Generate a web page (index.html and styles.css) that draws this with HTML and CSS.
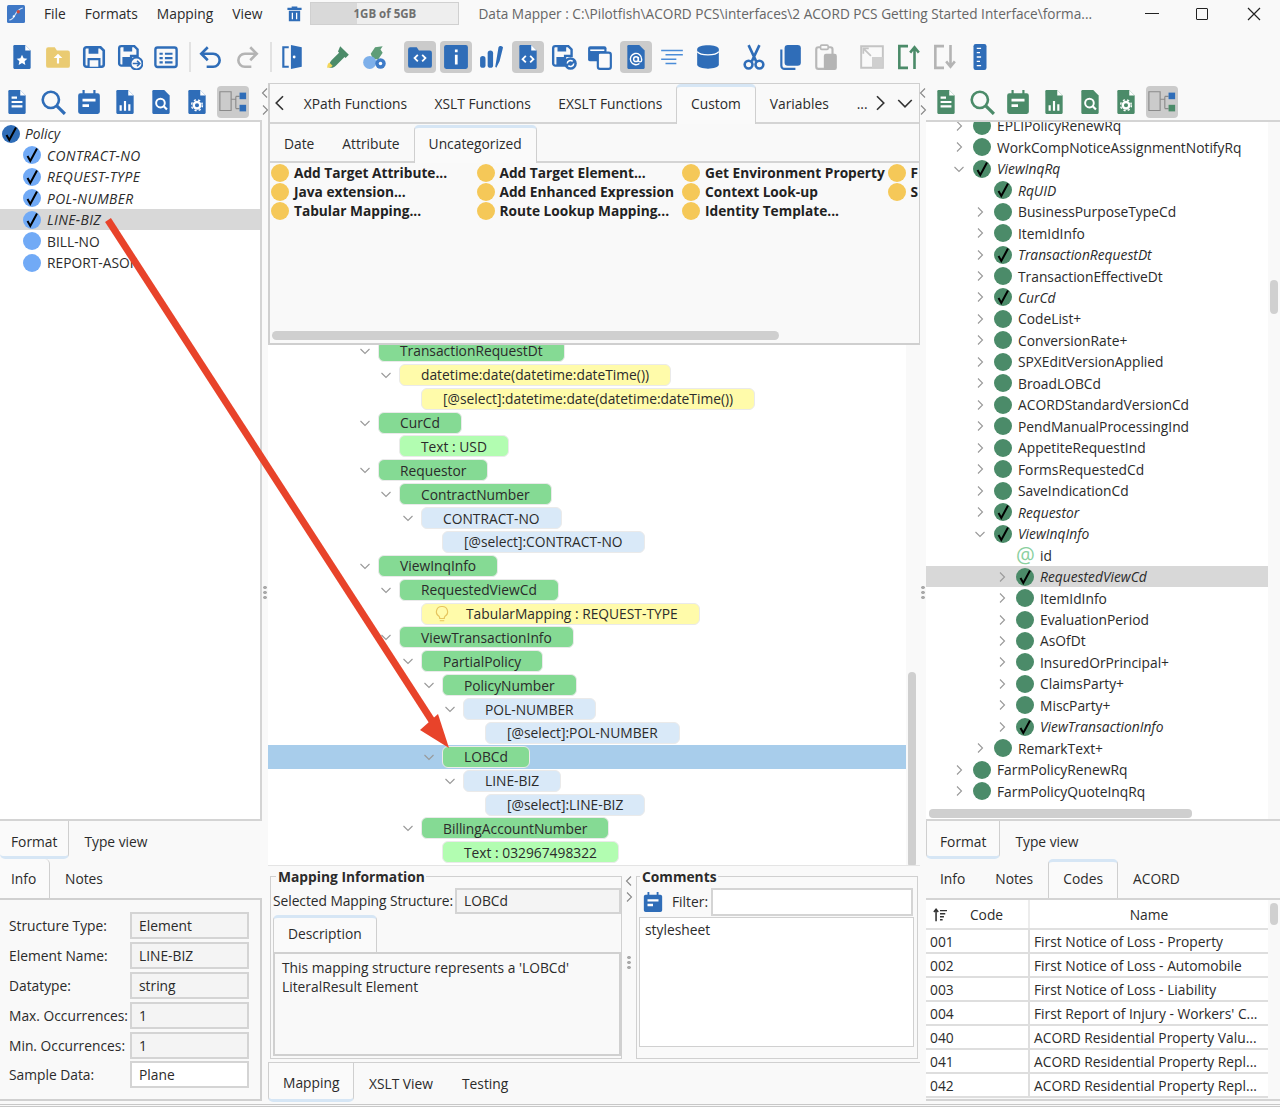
FILE: index.html
```html
<!DOCTYPE html>
<html lang="en">
<head>
<meta charset="UTF-8">
<title>Data Mapper</title>
<link rel="stylesheet" href="styles.css">
</head>
<body>
<svg class="defs" width="0" height="0">
	<symbol id="i-tick" viewBox="0 0 18 18"><path d="M4.500 10l2.800 5L14 2.500" fill="none" stroke="#000" stroke-width="2"/></symbol>
	<symbol id="i-chev" viewBox="0 0 12 12"><path d="M4 1.500L8.500 6 4 10.500" fill="none" stroke="currentColor" stroke-width="1.100"/></symbol>
	<symbol id="i-down" viewBox="0 0 12 12"><path d="M1.500 4L6 8.500 10.500 4" fill="none" stroke="currentColor" stroke-width="1.100"/></symbol>
	<symbol id="i-docstar" viewBox="0 0 24 24"><path d="M5 1h10l5 5v16a1 1 0 0 1-1 1H5a1 1 0 0 1-1-1V2a1 1 0 0 1 1-1z" fill="currentColor"/><path d="M15 1v5h5z" fill="#fff"/><path d="M12 10l1.500 3.200 3.400.4-2.500 2.300.7 3.400-3.100-1.700-3.100 1.700.7-3.400-2.500-2.300 3.400-.4z" fill="#fff"/></symbol>
	<symbol id="i-folder" viewBox="0 0 24 24"><path d="M1 5a2 2 0 0 1 2-2h6l2 3h10a2 2 0 0 1 2 2v12a2 2 0 0 1-2 2H3a2 2 0 0 1-2-2z" fill="#eacb72"/><path d="M12 9l4 4h-3v5h-2v-5H8z" fill="#fff"/></symbol>
	<symbol id="i-save" viewBox="0 0 24 24"><path d="M3 5a2 2 0 0 1 2-2h13l3 3v13a2 2 0 0 1-2 2H5a2 2 0 0 1-2-2z" fill="none" stroke="currentColor" stroke-width="2.400"/><path d="M7 3h9v6H7zM6 13h12v8H6z" fill="currentColor"/><path d="M8 15h8v6H8z" fill="#fafafa"/></symbol>
	<symbol id="i-saveas" viewBox="0 0 24 24"><path d="M2 4a2 2 0 0 1 2-2h12l3 3v6h-6v9H4a2 2 0 0 1-2-2z" fill="none" stroke="currentColor" stroke-width="2.200"/><path d="M6 2h8v5H6zM5 12h7v8H5z" fill="currentColor"/><circle cx="18" cy="18" r="5.500" fill="#fafafa" stroke="currentColor" stroke-width="1.800"/><path d="M14.500 18h6M18.500 15.500l2.500 2.500-2.500 2.500" fill="none" stroke="currentColor" stroke-width="1.500"/></symbol>
	<symbol id="i-list" viewBox="0 0 24 24"><rect x="2.200" y="3.200" width="19.600" height="18" rx="2" fill="none" stroke="currentColor" stroke-width="2.200"/><path d="M6 8h3v2H6zM11 8h7v2h-7zM6 12h3v2H6zM11 12h7v2h-7zM6 16h3v2H6zM11 16h7v2h-7z" fill="currentColor"/></symbol>
	<symbol id="i-undo" viewBox="0 0 24 24"><path d="M9 3L3 9l6 6" fill="none" stroke="currentColor" stroke-width="2.400"/><path d="M3 9h11a6 6 0 0 1 0 12H8" fill="none" stroke="currentColor" stroke-width="2.400"/></symbol>
	<symbol id="i-redo" viewBox="0 0 24 24"><path d="M15 3l6 6-6 6" fill="none" stroke="currentColor" stroke-width="2.400"/><path d="M21 9H10a6 6 0 0 0 0 12h6" fill="none" stroke="currentColor" stroke-width="2.400"/></symbol>
	<symbol id="i-door" viewBox="0 0 24 24"><path d="M3 2h6v2H5v16h4v2H3z" fill="currentColor"/><path d="M11 1l10 2v18l-10 2z" fill="currentColor"/><circle cx="14" cy="12" r="1.300" fill="#fff"/></symbol>
	<symbol id="i-dropper" viewBox="0 0 24 24"><path d="M14 2l8 8-3 3-1-1-8 8c-2 2-4 2-6 2 0-3 0-5 2-7l7-7-1-1z" fill="currentColor"/><path d="M2 22c2 0 4-.5 5-2l-3-3c-1.500 1-2 3-2 5z" fill="#f4d75a"/></symbol>
	<symbol id="i-bugs" viewBox="0 0 24 24"><path d="M13 3l7-1-2 3 2 3-4 6h-5l-2-5z" fill="#5f9d78"/><ellipse cx="8" cy="17" rx="6" ry="6" fill="#7eb0ea"/><circle cx="18" cy="18" r="4.800" fill="#3f7cc8"/><circle cx="18" cy="18" r="1.600" fill="#fff"/></symbol>
	<symbol id="i-foldercode" viewBox="0 0 24 24"><path d="M1 5a2 2 0 0 1 2-2h6l2 3h10a2 2 0 0 1 2 2v12a2 2 0 0 1-2 2H3a2 2 0 0 1-2-2z" fill="currentColor"/><path d="M10 10l-3 3 3 3M14 10l3 3-3 3" fill="none" stroke="#fff" stroke-width="1.700"/></symbol>
	<symbol id="i-info" viewBox="0 0 24 24"><rect x="1" y="1" width="22" height="22" rx="2" fill="currentColor"/><path d="M11 5h2.500v2.500H11zM11 10h2.500v9H11z" fill="#fff"/></symbol>
	<symbol id="i-chart" viewBox="0 0 24 24"><rect x="1" y="11" width="5" height="11" rx="2.500" fill="currentColor"/><rect x="8" y="6" width="5" height="16" rx="2.500" fill="currentColor"/><path d="M15 21l3-18c1-2 5-1 4 1l-3 12-3 6z" fill="currentColor"/></symbol>
	<symbol id="i-doccode" viewBox="0 0 24 24"><path d="M5 1h10l5 5v16a1 1 0 0 1-1 1H5a1 1 0 0 1-1-1V2a1 1 0 0 1 1-1z" fill="currentColor"/><path d="M15 1v5h5z" fill="#fff"/><path d="M10 11l-3 3 3 3M14 11l3 3-3 3" fill="none" stroke="#fff" stroke-width="1.700"/></symbol>
	<symbol id="i-savesync" viewBox="0 0 24 24"><path d="M2 4a2 2 0 0 1 2-2h12l3 3v6h-6v9H4a2 2 0 0 1-2-2z" fill="none" stroke="currentColor" stroke-width="2.200"/><path d="M6 2h8v5H6zM5 12h7v8H5z" fill="currentColor"/><circle cx="18" cy="18" r="5.800" fill="currentColor"/><path d="M15 18a3 3 0 0 1 5-2M21 18a3 3 0 0 1-5 2" fill="none" stroke="#fff" stroke-width="1.400"/></symbol>
	<symbol id="i-devices" viewBox="0 0 24 24"><rect x="1" y="2" width="17" height="14" rx="2" fill="currentColor"/><path d="M3 5h13v1.500H3z" fill="#fff"/><rect x="10" y="8" width="12" height="15" rx="2" fill="#fafafa" stroke="currentColor" stroke-width="2"/></symbol>
	<symbol id="i-at" viewBox="0 0 24 24"><path d="M5 1h10l5 5v16a1 1 0 0 1-1 1H5a1 1 0 0 1-1-1V2a1 1 0 0 1 1-1z" fill="currentColor"/><circle cx="12" cy="14" r="2.200" fill="none" stroke="#fff" stroke-width="1.300"/><path d="M14.200 12v3a1.500 1.500 0 0 0 3 0v-1a5.200 5.200 0 1 0-2 4" fill="none" stroke="#fff" stroke-width="1.300"/></symbol>
	<symbol id="i-lines" viewBox="0 0 24 24"><path d="M2 6h20M6 10h16M2 14h14M6 18h10" fill="none" stroke="#4a8cd8" stroke-width="1.400"/></symbol>
	<symbol id="i-db" viewBox="0 0 24 24"><path d="M2 5c0-5 20-5 20 0v14c0 5-20 5-20 0z" fill="currentColor"/><path d="M2 7c3 4 17 4 20 0" fill="none" stroke="#fff" stroke-width="1.200"/></symbol>
	<symbol id="i-cut" viewBox="0 0 24 24"><path d="M7 1l7 15M17 1l-7 15" fill="none" stroke="currentColor" stroke-width="2.400"/><circle cx="7" cy="19" r="3.600" fill="none" stroke="currentColor" stroke-width="2.400"/><circle cx="17" cy="19" r="3.600" fill="none" stroke="currentColor" stroke-width="2.400"/></symbol>
	<symbol id="i-copy" viewBox="0 0 24 24"><rect x="7" y="1" width="15" height="19" rx="3" fill="currentColor"/><path d="M4 5v15a3 3 0 0 0 3 3h10" fill="none" stroke="currentColor" stroke-width="2"/></symbol>
	<symbol id="i-paste" viewBox="0 0 24 24"><rect x="3" y="3" width="15" height="20" rx="2" fill="none" stroke="#b8b8b8" stroke-width="2"/><rect x="7" y="1" width="7" height="4" rx="1" fill="#fafafa" stroke="#b8b8b8" stroke-width="1.500"/><rect x="10" y="9" width="12" height="15" rx="2" fill="#b4b4b4"/></symbol>
	<symbol id="i-resize" viewBox="0 0 24 24"><path d="M2 2h20v20H2z" fill="none" stroke="#c4c4c4" stroke-width="1.800"/><path d="M12 12h10v10H12z" fill="#cfcfcf"/><path d="M4 4l7 7M4 9V4h5" fill="none" stroke="#c4c4c4" stroke-width="1.600"/></symbol>
	<symbol id="i-up" viewBox="0 0 24 24"><path d="M12 2H4v20h8" fill="none" stroke="currentColor" stroke-width="2.400"/><path d="M18 23V4M14 8l4-5 4 5" fill="none" stroke="currentColor" stroke-width="2.400"/></symbol>
	<symbol id="i-dn" viewBox="0 0 24 24"><path d="M12 2H4v20h8" fill="none" stroke="currentColor" stroke-width="2.400"/><path d="M18 1v19M14 16l4 5 4-5" fill="none" stroke="currentColor" stroke-width="2.400"/></symbol>
	<symbol id="i-ruler" viewBox="0 0 24 24"><rect x="6" y="0" width="12" height="24" rx="2" fill="currentColor"/><path d="M9 4h4M9 8h3M9 12h4M9 16h3M9 20h4" stroke="#fff" stroke-width="1.200"/></symbol>
	<symbol id="i-doclines" viewBox="0 0 24 24"><path d="M5 1h10l5 5v16a1 1 0 0 1-1 1H5a1 1 0 0 1-1-1V2a1 1 0 0 1 1-1z" fill="currentColor"/><path d="M15 1v5h5z" fill="#fff"/><path d="M7 11h10v2H7zM7 15h10v2H7zM7 7h5v2H7z" fill="#fff"/></symbol>
	<symbol id="i-search" viewBox="0 0 24 24"><circle cx="10" cy="10" r="7.500" fill="none" stroke="currentColor" stroke-width="2.400"/><path d="M15.500 15.500L23 23" stroke="currentColor" stroke-width="3"/></symbol>
	<symbol id="i-note" viewBox="0 0 24 24"><path d="M6 1h2v3h8V1h2v3h2a2 2 0 0 1 2 2v15a2 2 0 0 1-2 2H4a2 2 0 0 1-2-2V6a2 2 0 0 1 2-2h2z" fill="currentColor"/><path d="M6 9h12v2.500H6zM6 14h6v2.500H6z" fill="#fff"/></symbol>
	<symbol id="i-docchart" viewBox="0 0 24 24"><path d="M5 1h10l5 5v16a1 1 0 0 1-1 1H5a1 1 0 0 1-1-1V2a1 1 0 0 1 1-1z" fill="currentColor"/><path d="M15 1v5h5z" fill="#fff"/><path d="M7 15h2v5H7zM11 11h2v9h-2zM15 14h2v6h-2z" fill="#fff"/></symbol>
	<symbol id="i-docsearch" viewBox="0 0 24 24"><path d="M5 1h10l5 5v16a1 1 0 0 1-1 1H5a1 1 0 0 1-1-1V2a1 1 0 0 1 1-1z" fill="currentColor"/><circle cx="11.500" cy="13" r="4" fill="none" stroke="#fff" stroke-width="1.800"/><path d="M14.500 16l3 3" stroke="#fff" stroke-width="2"/></symbol>
	<symbol id="i-docgear" viewBox="0 0 24 24"><path d="M5 1h10l5 5v16a1 1 0 0 1-1 1H5a1 1 0 0 1-1-1V2a1 1 0 0 1 1-1z" fill="currentColor"/><path d="M15 1v5h5z" fill="#fff"/><circle cx="12" cy="15" r="3" fill="none" stroke="#fff" stroke-width="2.200"/><circle cx="12" cy="15" r="5" fill="none" stroke="#fff" stroke-width="1.300" stroke-dasharray="2 2"/></symbol>
	<symbol id="i-treeb" viewBox="0 0 32 32"><path d="M2 5h12v20H2z" fill="none" stroke="#8a8a8a" stroke-width="1.200"/><path d="M14 13h5M19 10v13M19 10h4M19 23h4" fill="none" stroke="#8a8a8a" stroke-width="1.200"/><rect x="23" y="6" width="7" height="7" fill="#2f6db8"/><rect x="23" y="19" width="7" height="7" fill="#2f6db8"/></symbol>
	<symbol id="i-treeg" viewBox="0 0 32 32"><path d="M2 5h12v20H2z" fill="none" stroke="#8a8a8a" stroke-width="1.200"/><path d="M14 13h5M19 10v13M19 10h4M19 23h4" fill="none" stroke="#8a8a8a" stroke-width="1.200"/><rect x="23" y="6" width="7" height="7" fill="#2f6db8"/><rect x="23" y="19" width="7" height="7" fill="#4b8b69"/></symbol>
	<symbol id="i-trash" viewBox="0 0 24 24"><path d="M8 2h8v2h6v3H2V4h6zM4 8h16v15H4z" fill="currentColor"/><path d="M9 11v9M15 11v9" stroke="#fff" stroke-width="1.800"/></symbol>
	<symbol id="i-logo" viewBox="0 0 24 24"><rect width="24" height="24" rx="2" fill="#3f78c6"/><path d="M3 20c5 0 6-4 9-9s5-6 9-7" fill="none" stroke="#cfe0f7" stroke-width="1.600"/><circle cx="15" cy="9" r="2.200" fill="#d04a3c"/><circle cx="9" cy="15" r="1.500" fill="#fff"/></symbol>
	<symbol id="i-bulb" viewBox="0 0 24 24"><path d="M12 2a7 7 0 0 0-4 13c1 1 1 2 1 3h6c0-1 0-2 1-3a7 7 0 0 0-4-13zM9 21h6" fill="none" stroke="#e6c55f" stroke-width="1.600"/></symbol>
	<symbol id="i-sort" viewBox="0 0 16 16"><path d="M3.500 15V2M1 4.500L3.500 1.500 6 4.500" fill="none" stroke="#333" stroke-width="1.800"/><path d="M8 3h8M8 6.500h6M8 10h4.500M8 13.500h3" stroke="#333" stroke-width="1.700"/></symbol>
</svg>

<div class="window">
	<div class="titlebar">
		<svg class="logo"><use href="#i-logo"/></svg>
		<nav class="menu">
			<span>File</span><span>Formats</span><span>Mapping</span><span>View</span>
		</nav>
		<svg class="trash blue"><use href="#i-trash"/></svg>
		<div class="memory"><div class="memory-used"></div><span class="memory-text">1GB of 5GB</span></div>
		<div class="title-text">Data Mapper : C:\Pilotfish\ACORD PCS\interfaces\2 ACORD PCS Getting Started Interface\forma...</div>
		<div class="win-controls">
			<span class="win-min"></span>
			<span class="win-max"></span>
			<svg class="win-close" viewBox="0 0 14 14"><path d="M1 1l12 12M13 1L1 13" stroke="#222" stroke-width="1.200"/></svg>
		</div>
	</div>

	<div class="toolbar">
		<div class="tb blue"><svg><use href="#i-docstar"/></svg></div>
		<div class="tb"><svg><use href="#i-folder"/></svg></div>
		<div class="tb blue"><svg><use href="#i-save"/></svg></div>
		<div class="tb blue"><svg><use href="#i-saveas"/></svg></div>
		<div class="tb blue"><svg><use href="#i-list"/></svg></div>
		<div class="tb-sep"></div>
		<div class="tb blue"><svg><use href="#i-undo"/></svg></div>
		<div class="tb grey"><svg><use href="#i-redo"/></svg></div>
		<div class="tb-sep"></div>
		<div class="tb blue"><svg><use href="#i-door"/></svg></div>
		<div class="tb green gap"><svg><use href="#i-dropper"/></svg></div>
		<div class="tb"><svg><use href="#i-bugs"/></svg></div>
		<div class="tb blue on gap"><svg><use href="#i-foldercode"/></svg></div>
		<div class="tb blue on"><svg><use href="#i-info"/></svg></div>
		<div class="tb blue"><svg><use href="#i-chart"/></svg></div>
		<div class="tb blue on"><svg><use href="#i-doccode"/></svg></div>
		<div class="tb blue"><svg><use href="#i-savesync"/></svg></div>
		<div class="tb blue"><svg><use href="#i-devices"/></svg></div>
		<div class="tb blue on"><svg><use href="#i-at"/></svg></div>
		<div class="tb"><svg><use href="#i-lines"/></svg></div>
		<div class="tb blue"><svg><use href="#i-db"/></svg></div>
		<div class="tb blue gap"><svg><use href="#i-cut"/></svg></div>
		<div class="tb blue"><svg><use href="#i-copy"/></svg></div>
		<div class="tb"><svg><use href="#i-paste"/></svg></div>
		<div class="tb gap"><svg><use href="#i-resize"/></svg></div>
		<div class="tb green"><svg><use href="#i-up"/></svg></div>
		<div class="tb grey"><svg><use href="#i-dn"/></svg></div>
		<div class="tb blue"><svg><use href="#i-ruler"/></svg></div>
	</div>

	<div class="workspace">
		<!-- left panel -->
		<section class="side side-left">
			<div class="side-tools blue">
				<div class="st"><svg><use href="#i-doclines"/></svg></div>
				<div class="st"><svg><use href="#i-search"/></svg></div>
				<div class="st"><svg><use href="#i-note"/></svg></div>
				<div class="st"><svg><use href="#i-docchart"/></svg></div>
				<div class="st"><svg><use href="#i-docsearch"/></svg></div>
				<div class="st"><svg><use href="#i-docgear"/></svg></div>
				<div class="st on"><svg><use href="#i-treeb"/></svg></div>
			</div>
			<div class="tree tree-left">
				<div class="row l0 it"><span class="dot dark"><svg><use href="#i-tick"/></svg></span>Policy</div>
				<div class="row l1 it"><span class="dot light"><svg><use href="#i-tick"/></svg></span>CONTRACT-NO</div>
				<div class="row l1 it"><span class="dot light"><svg><use href="#i-tick"/></svg></span>REQUEST-TYPE</div>
				<div class="row l1 it"><span class="dot light"><svg><use href="#i-tick"/></svg></span>POL-NUMBER</div>
				<div class="row l1 it sel"><span class="dot light"><svg><use href="#i-tick"/></svg></span>LINE-BIZ</div>
				<div class="row l1"><span class="dot light"></span>BILL-NO</div>
				<div class="row l1"><span class="dot light"></span>REPORT-ASOF</div>
			</div>
			<div class="tabs-low">
				<span class="tab-b first">Format</span><span class="tab-p">Type view</span>
			</div>
			<div class="tabs-inner">
				<span class="tab-t first">Info</span><span class="tab-p">Notes</span>
			</div>
			<div class="form">
				<div class="form-row"><label>Structure Type:</label><span class="field">Element</span></div>
				<div class="form-row"><label>Element Name:</label><span class="field">LINE-BIZ</span></div>
				<div class="form-row"><label>Datatype:</label><span class="field">string</span></div>
				<div class="form-row"><label>Max. Occurrences:</label><span class="field">1</span></div>
				<div class="form-row"><label>Min. Occurrences:</label><span class="field">1</span></div>
				<div class="form-row"><label>Sample Data:</label><span class="field white">Plane</span></div>
			</div>
		</section>

		<div class="splitter">
			<svg class="flip"><use href="#i-chev"/></svg>
			<svg><use href="#i-chev"/></svg>
			<div class="grip grip-a"></div>
		</div>

		<!-- center -->
		<section class="center">
			<div class="func-pane">
				<div class="tabs-top">
					<svg class="nav flip"><use href="#i-chev"/></svg>
					<span class="tab-p wide">XPath Functions</span>
					<span class="tab-p wide">XSLT Functions</span>
					<span class="tab-p wide">EXSLT Functions</span>
					<span class="tab-t">Custom</span>
					<span class="tab-p">Variables</span>
					<span class="more">...</span>
					<svg class="nav"><use href="#i-chev"/></svg>
					<svg class="nav nav-down"><use href="#i-down"/></svg>
				</div>
				<div class="tabs-sub">
					<span class="tab-p">Date</span>
					<span class="tab-p">Attribute</span>
					<span class="tab-t">Uncategorized</span>
				</div>
				<div class="func-grid">
					<span><i></i>Add Target Attribute...</span>
					<span><i></i>Add Target Element...</span>
					<span><i></i>Get Environment Property</span>
					<span><i></i>F</span>
					<span><i></i>Java extension...</span>
					<span><i></i>Add Enhanced Expression</span>
					<span><i></i>Context Look-up</span>
					<span><i></i>S</span>
					<span><i></i>Tabular Mapping...</span>
					<span><i></i>Route Lookup Mapping...</span>
					<span><i></i>Identity Template...</span>
				</div>
				<div class="hscroll"></div>
			</div>

			<div class="map-pane">
				<div class="map-rows">
					<div class="node n0"><svg><use href="#i-down"/></svg><b class="pill mint">TransactionRequestDt</b></div>
					<div class="node n1"><svg><use href="#i-down"/></svg><b class="pill yellow">datetime:date(datetime:dateTime())</b></div>
					<div class="node n2"><b class="pill yellow">[@select]:datetime:date(datetime:dateTime())</b></div>
					<div class="node n0"><svg><use href="#i-down"/></svg><b class="pill mint">CurCd</b></div>
					<div class="node n1"><b class="pill lime">Text : USD</b></div>
					<div class="node n0"><svg><use href="#i-down"/></svg><b class="pill mint">Requestor</b></div>
					<div class="node n1"><svg><use href="#i-down"/></svg><b class="pill mint">ContractNumber</b></div>
					<div class="node n2"><svg><use href="#i-down"/></svg><b class="pill sky">CONTRACT-NO</b></div>
					<div class="node n3"><b class="pill sky">[@select]:CONTRACT-NO</b></div>
					<div class="node n0"><svg><use href="#i-down"/></svg><b class="pill mint">ViewInqInfo</b></div>
					<div class="node n1"><svg><use href="#i-down"/></svg><b class="pill mint">RequestedViewCd</b></div>
					<div class="node n2"><b class="pill yellow bulb"><svg><use href="#i-bulb"/></svg>TabularMapping : REQUEST-TYPE</b></div>
					<div class="node n1"><svg><use href="#i-down"/></svg><b class="pill mint">ViewTransactionInfo</b></div>
					<div class="node n2"><svg><use href="#i-down"/></svg><b class="pill mint">PartialPolicy</b></div>
					<div class="node n3"><svg><use href="#i-down"/></svg><b class="pill mint">PolicyNumber</b></div>
					<div class="node n4"><svg><use href="#i-down"/></svg><b class="pill sky">POL-NUMBER</b></div>
					<div class="node n5"><b class="pill sky">[@select]:POL-NUMBER</b></div>
					<div class="node n3 picked"><svg><use href="#i-down"/></svg><b class="pill mint">LOBCd</b></div>
					<div class="node n4"><svg><use href="#i-down"/></svg><b class="pill sky">LINE-BIZ</b></div>
					<div class="node n5"><b class="pill sky">[@select]:LINE-BIZ</b></div>
					<div class="node n2"><svg><use href="#i-down"/></svg><b class="pill mint">BillingAccountNumber</b></div>
					<div class="node n3"><b class="pill lime">Text : 032967498322</b></div>
				</div>
				<div class="vscroll"><div class="vthumb"></div></div>
			</div>

			<div class="info-pane">
				<fieldset class="group group-map">
					<legend>Mapping Information</legend>
					<div class="sel-row"><label>Selected Mapping Structure:</label><span class="field">LOBCd</span></div>
					<div class="desc-tabs"><span class="tab-t">Description</span></div>
					<div class="desc-box">This mapping structure represents a 'LOBCd'<br>LiteralResult Element</div>
				</fieldset>
				<div class="info-split">
					<svg class="flip"><use href="#i-chev"/></svg>
					<svg><use href="#i-chev"/></svg>
					<div class="grip"></div>
				</div>
				<fieldset class="group group-com">
					<legend>Comments</legend>
					<div class="filter-row">
						<svg class="blue"><use href="#i-note"/></svg>
						<label>Filter:</label>
						<span class="field white"></span>
					</div>
					<div class="comment-box">stylesheet</div>
				</fieldset>
			</div>

			<div class="tabs-bottom">
				<span class="tab-b">Mapping</span><span class="tab-p">XSLT View</span><span class="tab-p">Testing</span>
			</div>
		</section>

		<div class="splitter">
			<svg class="flip"><use href="#i-chev"/></svg>
			<svg><use href="#i-chev"/></svg>
			<div class="grip grip-a"></div>
		</div>

		<!-- right panel -->
		<section class="side side-right">
			<div class="side-tools green">
				<div class="st"><svg><use href="#i-doclines"/></svg></div>
				<div class="st"><svg><use href="#i-search"/></svg></div>
				<div class="st"><svg><use href="#i-note"/></svg></div>
				<div class="st"><svg><use href="#i-docchart"/></svg></div>
				<div class="st"><svg><use href="#i-docsearch"/></svg></div>
				<div class="st"><svg><use href="#i-docgear"/></svg></div>
				<div class="st on"><svg><use href="#i-treeg"/></svg></div>
			</div>
			<div class="tree tree-right">
				<div class="tree-rows">
					<div class="row t0"><svg class="chev"><use href="#i-chev"/></svg><span class="dot forest"></span>EPLIPolicyRenewRq</div>
					<div class="row t0"><svg class="chev"><use href="#i-chev"/></svg><span class="dot forest"></span>WorkCompNoticeAssignmentNotifyRq</div>
					<div class="row t0 it"><svg class="chev"><use href="#i-down"/></svg><span class="dot forest"><svg><use href="#i-tick"/></svg></span>ViewInqRq</div>
					<div class="row t1 it"><span class="chev"></span><span class="dot forest"><svg><use href="#i-tick"/></svg></span>RqUID</div>
					<div class="row t1"><svg class="chev"><use href="#i-chev"/></svg><span class="dot forest"></span>BusinessPurposeTypeCd</div>
					<div class="row t1"><svg class="chev"><use href="#i-chev"/></svg><span class="dot forest"></span>ItemIdInfo</div>
					<div class="row t1 it"><svg class="chev"><use href="#i-chev"/></svg><span class="dot forest"><svg><use href="#i-tick"/></svg></span>TransactionRequestDt</div>
					<div class="row t1"><svg class="chev"><use href="#i-chev"/></svg><span class="dot forest"></span>TransactionEffectiveDt</div>
					<div class="row t1 it"><svg class="chev"><use href="#i-chev"/></svg><span class="dot forest"><svg><use href="#i-tick"/></svg></span>CurCd</div>
					<div class="row t1"><svg class="chev"><use href="#i-chev"/></svg><span class="dot forest"></span>CodeList+</div>
					<div class="row t1"><svg class="chev"><use href="#i-chev"/></svg><span class="dot forest"></span>ConversionRate+</div>
					<div class="row t1"><svg class="chev"><use href="#i-chev"/></svg><span class="dot forest"></span>SPXEditVersionApplied</div>
					<div class="row t1"><svg class="chev"><use href="#i-chev"/></svg><span class="dot forest"></span>BroadLOBCd</div>
					<div class="row t1"><svg class="chev"><use href="#i-chev"/></svg><span class="dot forest"></span>ACORDStandardVersionCd</div>
					<div class="row t1"><svg class="chev"><use href="#i-chev"/></svg><span class="dot forest"></span>PendManualProcessingInd</div>
					<div class="row t1"><svg class="chev"><use href="#i-chev"/></svg><span class="dot forest"></span>AppetiteRequestInd</div>
					<div class="row t1"><svg class="chev"><use href="#i-chev"/></svg><span class="dot forest"></span>FormsRequestedCd</div>
					<div class="row t1"><svg class="chev"><use href="#i-chev"/></svg><span class="dot forest"></span>SaveIndicationCd</div>
					<div class="row t1 it"><svg class="chev"><use href="#i-chev"/></svg><span class="dot forest"><svg><use href="#i-tick"/></svg></span>Requestor</div>
					<div class="row t1 it"><svg class="chev"><use href="#i-down"/></svg><span class="dot forest"><svg><use href="#i-tick"/></svg></span>ViewInqInfo</div>
					<div class="row t2"><span class="chev"></span><span class="at">@</span>id</div>
					<div class="row t2 it sel"><svg class="chev"><use href="#i-chev"/></svg><span class="dot forest"><svg><use href="#i-tick"/></svg></span>RequestedViewCd</div>
					<div class="row t2"><svg class="chev"><use href="#i-chev"/></svg><span class="dot forest"></span>ItemIdInfo</div>
					<div class="row t2"><svg class="chev"><use href="#i-chev"/></svg><span class="dot forest"></span>EvaluationPeriod</div>
					<div class="row t2"><svg class="chev"><use href="#i-chev"/></svg><span class="dot forest"></span>AsOfDt</div>
					<div class="row t2"><svg class="chev"><use href="#i-chev"/></svg><span class="dot forest"></span>InsuredOrPrincipal+</div>
					<div class="row t2"><svg class="chev"><use href="#i-chev"/></svg><span class="dot forest"></span>ClaimsParty+</div>
					<div class="row t2"><svg class="chev"><use href="#i-chev"/></svg><span class="dot forest"></span>MiscParty+</div>
					<div class="row t2 it"><svg class="chev"><use href="#i-chev"/></svg><span class="dot forest"><svg><use href="#i-tick"/></svg></span>ViewTransactionInfo</div>
					<div class="row t1"><svg class="chev"><use href="#i-chev"/></svg><span class="dot forest"></span>RemarkText+</div>
					<div class="row t0"><svg class="chev"><use href="#i-chev"/></svg><span class="dot forest"></span>FarmPolicyRenewRq</div>
					<div class="row t0"><svg class="chev"><use href="#i-chev"/></svg><span class="dot forest"></span>FarmPolicyQuoteInqRq</div>
					<div class="row t0"><span class="chev"></span><span class="dot forest"></span></div>
				</div>
				<div class="tree-vscroll"><div class="tree-vthumb"></div></div>
				<div class="tree-hscroll"></div>
			</div>
			<div class="tabs-low">
				<span class="tab-b first">Format</span><span class="tab-p">Type view</span>
			</div>
			<div class="tabs-inner">
				<span class="tab-p">Info</span><span class="tab-p">Notes</span><span class="tab-t">Codes</span><span class="tab-p">ACORD</span>
			</div>
			<div class="codes">
				<table>
					<thead><tr><th class="c1"><svg><use href="#i-sort"/></svg>Code</th><th>Name</th></tr></thead>
					<tbody>
						<tr><td>001</td><td>First Notice of Loss - Property</td></tr>
						<tr><td>002</td><td>First Notice of Loss - Automobile</td></tr>
						<tr><td>003</td><td>First Notice of Loss - Liability</td></tr>
						<tr><td>004</td><td>First Report of Injury - Workers' C...</td></tr>
						<tr><td>040</td><td>ACORD Residential Property Valu...</td></tr>
						<tr><td>041</td><td>ACORD Residential Property Repl...</td></tr>
						<tr><td>042</td><td>ACORD Residential Property Repl...</td></tr>
					</tbody>
				</table>
				<div class="codes-thumb"></div>
			</div>
		</section>
	</div>
	<div class="foot-line"></div>

	<svg class="arrow" viewBox="0 0 1280 1107"><path d="M108 220L434 724" stroke="#e8432a" stroke-width="7" fill="none"/><path d="M449 748L420 730L438 714z" fill="#e8432a"/></svg>
</div>
</body>
</html>
```

FILE: styles.css
```css
* {
	box-sizing: border-box;
}

html, body {
	margin: 0;
	height: 100%;
}

body {
	font-family: "Open Sans", "Noto Sans", sans-serif;
	font-size: 13.800px;
	color: #2b2b2b;
	background: #f9f9f9;
	overflow: hidden;
}

.defs {
	position: absolute;
}

.window {
	position: relative;
	width: 1280px;
	height: 1107px;
	overflow: hidden;
}

.blue { color: #2f6db8; }
.green { color: #4b8b69; }
.grey { color: #b4b4b4; }
.flip { transform: scaleX(-1); }

/* title bar */
.titlebar {
	height: 27px;
	display: flex;
	align-items: center;
}

.logo {
	width: 18px;
	height: 18px;
	margin-left: 7px;
}

.menu {
	display: flex;
	gap: 19px;
	margin-left: 19px;
}

.trash {
	width: 17px;
	height: 17px;
	margin-left: 24px;
}

.memory {
	position: relative;
	width: 149px;
	height: 23px;
	margin-left: 7px;
	background: #eeeeee;
	border: 1px solid #d0d0d0;
	text-align: center;
}

.memory-used {
	width: 46px;
	height: 100%;
	background: #d9d9d9;
}

.memory-text {
	position: absolute;
	left: 0;
	right: 0;
	top: 3px;
	font-size: 11.500px;
	font-weight: 700;
	color: #707070;
}

.title-text {
	margin-left: 19px;
	width: 620px;
	white-space: nowrap;
	font-size: 13.650px;
	color: #666;
}

.win-controls {
	display: flex;
	align-items: center;
	margin-left: auto;
	width: 135px;
}

.win-min {
	width: 14px;
	height: 1px;
	background: #222;
}

.win-max {
	width: 12px;
	height: 12px;
	border: 1px solid #222;
	border-radius: 1px;
	margin-left: 37px;
}

.win-close {
	width: 14px;
	height: 14px;
	margin-left: 39px;
}

/* main toolbar */
.toolbar {
	height: 56px;
	display: flex;
	align-items: center;
	padding-left: 6px;
	padding-top: 4px;
}

.tb {
	width: 32px;
	height: 32px;
	margin-right: 4px;
	display: flex;
	align-items: center;
	justify-content: center;
	border-radius: 4px;
}

.tb svg {
	width: 26px;
	height: 26px;
}

.tb.on, .st.on {
	background: #cbcbcb;
}

.tb.gap {
	margin-left: 10px;
}

.tb-sep {
	width: 2px;
	height: 30px;
	background: #e2e2e2;
	margin: 0 4px 0 3px;
}

/* panels */
.workspace {
	display: flex;
	height: 1021px;
}

.side {
	display: flex;
	flex-direction: column;
}

.side-left {
	width: 262px;
}

.side-right {
	width: 354px;
}

.splitter {
	position: relative;
	width: 6px;
	color: #888;
}

.splitter > svg {
	display: block;
	width: 12px;
	height: 12px;
	margin-left: -3px;
}

.splitter > svg:first-child {
	margin-top: 4px;
	margin-bottom: 5px;
}

.grip {
	width: 4px;
	height: 14px;
	background: radial-gradient(circle, #aaa 1.500px, transparent 2px) 0 0 / 4px 5px;
}

.grip-a {
	position: absolute;
	left: 1px;
	top: 502px;
}

.side-tools {
	height: 37px;
	display: flex;
	align-items: center;
	padding-left: 1px;
}

.side-right .side-tools {
	padding-left: 4px;
}

.st {
	width: 32px;
	height: 32px;
	margin-right: 4px;
	display: flex;
	align-items: center;
	justify-content: center;
	border-radius: 4px;
}

.st svg {
	width: 26px;
	height: 26px;
}

.st.on svg {
	width: 30px;
	height: 30px;
}

/* trees */
.tree {
	position: relative;
	height: 701px;
	background: #fff;
	border-top: 2px solid #d4d4d4;
	border-bottom: 2px solid #d4d4d4;
	overflow: hidden;
	flex: none;
}

.tree-left {
	border-right: 2px solid #d4d4d4;
}

.row {
	height: 21.480px;
	display: flex;
	align-items: center;
	white-space: nowrap;
}

.it {
	font-style: italic;
}

.row.sel {
	background: #d8d8d8;
}

.row.l0 { padding-left: 2px; }
.row.l1 { padding-left: 23px; }
.row.t0 { padding-left: 27px; }
.row.t1 { padding-left: 48px; }
.row.t2 { padding-left: 70px; }

.tree-left .l1.it {
	letter-spacing: .4px;
}

.tree-left .row:first-child {
	margin-top: 1px;
}

.dot {
	width: 18px;
	height: 18px;
	border-radius: 50%;
	margin-right: 6px;
	flex: none;
}

.dot svg {
	display: block;
	width: 18px;
	height: 18px;
}

.dot.dark { background: #2f6db8; margin-right: 5px; }
.dot.light { background: #71aaf6; }
.dot.forest { background: #4b8b69; }

.chev {
	width: 12px;
	height: 12px;
	margin-right: 8px;
	flex: none;
	color: #999;
}

.at {
	width: 18px;
	margin-right: 6px;
	font-size: 21px;
	line-height: 18px;
	color: #8ad0a0;
	text-align: center;
}

.tree-rows {
	width: 342px;
	height: 686px;
	margin-top: -7px;
	overflow: hidden;
}

.tree-vscroll {
	position: absolute;
	left: 342px;
	top: 0;
	right: 0;
	bottom: 0;
	background: #f9f9f9;
}

.tree-vthumb {
	width: 8px;
	height: 34px;
	margin: 158px 0 0 2px;
	background: #d0d0d0;
	border-radius: 4px;
}

.tree-hscroll {
	position: absolute;
	left: 3px;
	bottom: 1px;
	width: 263px;
	height: 9px;
	background: #cfcfcf;
	border-radius: 4px;
}

/* tabs */
.tabs-low, .tabs-inner {
	display: flex;
	flex: none;
}

.tabs-low {
	height: 38px;
}

.tabs-low .tab-b {
	padding-top: 5px;
}

.tabs-low .tab-p {
	padding-top: 2px;
	padding-left: 15px;
}

.tabs-inner {
	height: 39px;
}

.tab-p, .tab-t, .tab-b {
	display: flex;
	align-items: center;
	padding: 0 14px;
	white-space: nowrap;
}

.tab-t {
	background: #fafafa;
	border: 1px solid #cfcfcf;
	border-bottom: none;
	border-top: 3px solid #d6e6f5;
	border-radius: 5px 5px 0 0;
	padding-bottom: 4px;
}

.tab-b {
	background: #fafafa;
	border: 1px solid #cfcfcf;
	border-top: none;
	border-bottom: 3px solid #d6e6f5;
	border-radius: 0 0 5px 5px;
}

.tab-t.first, .tab-b.first {
	border-left: none;
	border-top-left-radius: 0;
	padding-left: 11px;
	padding-right: 11px;
}

.side-right .tab-b.first {
	border-left: 1px solid #cfcfcf;
	padding-left: 13px;
	padding-right: 13px;
}

.tabs-inner .tab-p {
	padding: 0 15px;
}

.side-left .tabs-inner .tab-t {
	border-top: none;
	padding-bottom: 0;
	padding-left: 11px;
	width: 50px;
}

.side-right .tabs-inner .tab-p:first-child {
	padding-left: 14px;
}

/* left form */
.form {
	height: 203px;
	border: 2px solid #d0d0d0;
	border-left: none;
	padding: 11px 0 0 9px;
}

.form-row {
	display: flex;
	align-items: center;
	height: 29.800px;
}

.form-row label {
	width: 121px;
	white-space: nowrap;
}

.field {
	display: flex;
	align-items: center;
	background: #f4f4f4;
	border: 2px solid #d4d4d4;
	padding-left: 7px;
	white-space: nowrap;
}

.form-row .field {
	width: 119px;
	height: 27px;
}

.field.white {
	background: #fff;
}

/* center */
.center {
	width: 652px;
	display: flex;
	flex-direction: column;
}

.func-pane {
	position: relative;
	height: 262px;
	border: 1px solid #cfcfcf;
	border-left-width: 2px;
	border-bottom-width: 2px;
	overflow: hidden;
	flex: none;
}

.tabs-top {
	display: flex;
	align-items: stretch;
	height: 40px;
	border-bottom: 2px solid #d4d4d4;
}

.nav {
	width: 18px;
	height: 18px;
	align-self: center;
	color: #333;
	flex: none;
}

.tab-p.wide {
	padding: 0 13.750px;
}

.tabs-top .nav:first-child {
	margin-left: 1px;
	margin-right: 1px;
}

.tabs-top .tab-t {
	margin-bottom: -2px;
}

.more {
	align-self: center;
	margin-left: 14px;
	margin-right: 3px;
}

.nav-down {
	margin-left: 7px;
}

.tabs-sub {
	display: flex;
	height: 39px;
	border-bottom: 2px solid #d4d4d4;
	padding-top: 1px;
}

.tabs-sub .tab-t {
	margin-bottom: -2px;
}

.func-grid {
	display: grid;
	grid-template-columns: repeat(3, 205.500px) 40px;
	grid-auto-rows: 19px;
	padding: 0 0 0 1px;
	font-weight: 700;
	font-size: 13.700px;
	color: #222;
}

.func-grid span {
	display: flex;
	align-items: center;
	white-space: nowrap;
}

.func-grid i {
	width: 18px;
	height: 18px;
	margin-right: 5px;
	border-radius: 50%;
	background: #f5c858;
	flex: none;
}

.hscroll {
	position: absolute;
	left: 2px;
	bottom: 3px;
	width: 507px;
	height: 9px;
	background: #cfcfcf;
	border-radius: 5px;
}

.map-pane {
	display: flex;
	height: 521px;
	flex: none;
	background: #fff;
	border-bottom: 1px solid #e4e4e4;
	overflow: hidden;
}

.map-rows {
	width: 638px;
	margin-top: -6px;
}

.node {
	height: 23.880px;
	display: flex;
	align-items: center;
	white-space: nowrap;
}

.node svg {
	width: 12px;
	height: 12px;
	margin-left: -19px;
	margin-right: 7px;
	color: #999;
	flex: none;
}

.n0 { padding-left: 110px; }
.n1 { padding-left: 131px; }
.n2 { padding-left: 153px; }
.n3 { padding-left: 174px; }
.n4 { padding-left: 195px; }
.n5 { padding-left: 217px; }

.node.picked {
	background: #a8cdeb;
}

.pill {
	display: flex;
	align-items: center;
	height: 22px;
	padding: 0 21px;
	border: 1px solid #eaeaea;
	border-radius: 6px;
	font-weight: 400;
	color: #2b2b2b;
}

.pill.mint { background: #85da94; }
.pill.yellow { background: #fffbaa; }
.pill.lime { background: #b2fdb1; }
.pill.sky { background: #d9e9f8; }

.pill.bulb {
	padding-left: 11px;
}

.pill.bulb svg {
	width: 18px;
	height: 18px;
	margin: 0 15px 0 0;
}

.vscroll {
	width: 14px;
	background: #f9f9f9;
	flex: 1;
}

.vthumb {
	width: 8px;
	height: 195px;
	margin: 327px 0 0 2px;
	background: #cfcfcf;
	border-radius: 4px;
}

/* mapping info */
.info-pane {
	display: flex;
	height: 196px;
	flex: none;
	padding: 1px 0 0 2px;
}

.group {
	margin: 0;
	padding: 0 2px;
	height: 192px;
	border: 1px solid #d0d0d0;
	min-width: 0;
}

.group legend {
	padding: 0 1px 0 2px;
	margin-left: 3px;
	font-weight: 700;
}

.group-map {
	width: 352px;
	padding-right: 0;
}

.group-com {
	width: 282px;
}

.group-com legend {
	margin-left: 1px;
}

.info-split {
	width: 14px;
	color: #888;
	padding-top: 8px;
}

.info-split svg {
	display: block;
	width: 12px;
	height: 12px;
	margin: 0 0 4px 1px;
}

.info-split .grip {
	margin: 52px 0 0 5px;
}

.sel-row {
	display: flex;
	align-items: center;
	height: 29px;
}

.sel-row label {
	white-space: nowrap;
	flex: none;
	width: 182px;
	letter-spacing: -.05px;
}

.sel-row .field {
	flex: 1;
	height: 26px;
}

.desc-tabs {
	display: flex;
	height: 37px;
}

.desc-box {
	height: 104px;
	padding: 4px 7px;
	border: 2px solid #d0d0d0;
	line-height: 19px;
}

.filter-row {
	display: flex;
	align-items: center;
	height: 31px;
}

.filter-row svg {
	width: 22px;
	height: 22px;
	margin-left: 3px;
}

.filter-row label {
	margin-left: 8px;
	width: 39px;
}

.filter-row .field {
	width: 202px;
	height: 28px;
}

.comment-box {
	height: 130px;
	width: 275px;
	padding: 2px 5px;
	background: #fff;
	border: 1px solid #d0d0d0;
}

.tabs-bottom {
	display: flex;
	height: 40px;
	border-top: 1px solid #d0d0d0;
	flex: none;
}

.tabs-bottom .tab-p, .tabs-bottom .tab-b {
	padding-top: 2px;
}

.tabs-bottom .tab-p {
	padding-left: 14.500px;
	padding-right: 14.500px;
}

/* codes table */
.codes {
	position: relative;
	height: 203px;
	border-top: 2px solid #d4d4d4;
	border-bottom: 2px solid #d4d4d4;
	overflow: hidden;
}

.codes table {
	width: 342px;
	table-layout: fixed;
	border-collapse: collapse;
	background: #fff;
}

.codes th {
	height: 29px;
	font-weight: 400;
	text-align: center;
	border-right: 2px solid #ececec;
	border-bottom: 2px solid #e0e0e0;
}

.codes th.c1 {
	width: 103px;
	position: relative;
	padding-left: 20px;
}

.codes th svg {
	position: absolute;
	left: 7px;
	top: 8px;
	width: 14px;
	height: 14px;
}

.codes td {
	height: 24px;
	padding: 0 4px;
	white-space: nowrap;
	overflow: hidden;
	border-right: 2px solid #dedede;
	border-bottom: 2px solid #dedede;
}

.codes td:last-child, .codes th:last-child {
	border-right: none;
}

.codes-thumb {
	position: absolute;
	left: 344px;
	top: 3px;
	width: 8px;
	height: 22px;
	background: #d0d0d0;
	border-radius: 4px;
}

.foot-line {
	height: 3px;
	border-top: 1px solid #c8c8c8;
	border-bottom: 1px solid #c8c8c8;
}

.arrow {
	position: absolute;
	left: 0;
	top: 0;
	width: 1280px;
	height: 1107px;
	pointer-events: none;
}
```
